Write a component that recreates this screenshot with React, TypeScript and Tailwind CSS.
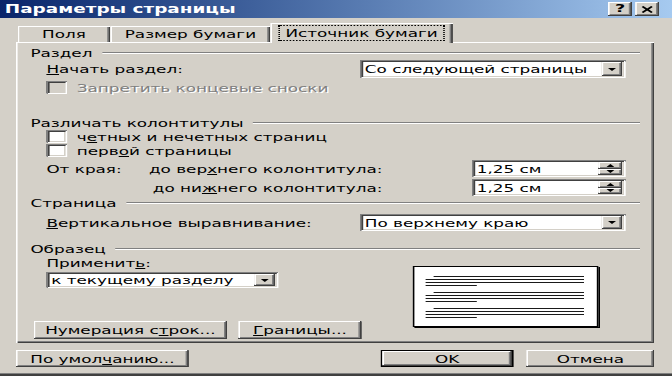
const raised =
  "bg-[#d4d0c8] shadow-[inset_-1px_-1px_0_#404040,inset_1px_1px_0_#ffffff,inset_-2px_-2px_0_#808080]";
const sunken =
  "shadow-[inset_1px_1px_0_#808080,inset_-1px_-1px_0_#ffffff,inset_2px_2px_0_#404040,inset_-2px_-2px_0_#d4d0c8]";

function Arrow() {
  return (
    <svg width="5" height="3" viewBox="0 0 5 3">
      <path d="M0 0h5L2.5 3z" fill="#000" />
    </svg>
  );
}

function Combo({ text, className }: { text: string; className: string }) {
  return (
    <div className={`flex items-center bg-white ${sunken} ${className}`}>
      <span className="flex-1 pl-[3px] whitespace-nowrap">{text}</span>
      <div className={`mr-[2px] flex h-[calc(100%-4px)] w-[13px] items-center justify-center ${raised}`}>
        <Arrow />
      </div>
    </div>
  );
}

function Spin({ text }: { text: string }) {
  return (
    <div className={`ml-auto flex h-[17px] w-[96px] items-center bg-white ${sunken}`}>
      <span className="flex-1 pl-[3px] whitespace-nowrap">{text}</span>
      <div className="mr-[2px] flex h-[13px] w-[15px] flex-col">
        <div className={`flex flex-1 items-center justify-center ${raised}`}>
          <svg width="5" height="3" viewBox="0 0 5 3">
            <path d="M2.5 0L5 3H0z" fill="#000" />
          </svg>
        </div>
        <div className={`flex flex-1 items-center justify-center ${raised}`}>
          <Arrow />
        </div>
      </div>
    </div>
  );
}

function Check({ disabled }: { disabled?: boolean }) {
  return (
    <div
      className={`h-[13px] w-[13px] shrink-0 ${disabled ? "bg-[#d4d0c8]" : "bg-white"} ${sunken}`}
    />
  );
}

function Group({ label }: { label: string }) {
  return (
    <div className="flex h-[12px] items-center pl-[9px] pr-[9px]">
      <span className="whitespace-nowrap">{label}</span>
      <div className="ml-[6px] h-0 flex-1 border-t border-b border-t-[#808080] border-b-white" />
    </div>
  );
}

function Btn({
  className,
  children,
}: {
  className: string;
  children: React.ReactNode;
}) {
  return (
    <div className={`flex items-center justify-center whitespace-nowrap ${raised} ${className}`}>
      {children}
    </div>
  );
}

function Para() {
  return (
    <div className="mb-[6px] flex flex-col gap-[2px]">
      <div className="ml-[5px] h-[1px] w-[94px] bg-[#1a1a1a]" />
      <div className="h-[1px] w-[99px] bg-[#1a1a1a]" />
      <div className="h-[1px] w-[99px] bg-[#1a1a1a]" />
      <div className="h-[1px] w-[32px] bg-[#1a1a1a]" />
    </div>
  );
}

export default function App() {
  return (
    <div className="h-[376px] w-[672px] overflow-hidden bg-[#d4d0c8]">
      <div className="flex h-[376px] w-[420px] origin-top-left scale-x-[1.6] flex-col bg-[#d4d0c8] font-['DejaVu_Sans',sans-serif] text-[10.5px] leading-[12px] text-black">
        {/* title bar */}
        <div className="flex h-[18px] shrink-0 items-center bg-linear-to-r from-[#0a246a] to-[#a6caf0] pl-[3px] pr-[8px]">
          <span className="text-[11.5px] font-bold text-white">Параметры страницы</span>
          <div className="ml-auto flex gap-[2px]">
            <div className={`flex h-[14px] w-[15px] items-center justify-center text-[11px] font-bold ${raised}`}>
              ?
            </div>
            <div className={`flex h-[14px] w-[15px] items-center justify-center ${raised}`}>
              <svg width="7" height="7" viewBox="0 0 7 7">
                <path d="M0.5 0.5L6.5 6.5M6.5 0.5L0.5 6.5" stroke="#000" strokeWidth="1.5" />
              </svg>
            </div>
          </div>
        </div>

        {/* tabs */}
        <div className="flex h-[24px] shrink-0 items-end pl-[11px]">
          <div className="flex h-[16px] w-[58px] items-center justify-center bg-[#d4d0c8] shadow-[inset_1px_1px_0_#ffffff,inset_-1px_0_0_#404040,inset_-2px_0_0_#808080]">
            Поля
          </div>
          <div className="flex h-[16px] w-[100px] items-center justify-center bg-[#d4d0c8] shadow-[inset_1px_1px_0_#ffffff,inset_-1px_0_0_#404040,inset_-2px_0_0_#808080]">
            Размер бумаги
          </div>
          <div className="relative z-10 -mb-[1px] flex h-[20px] w-[114px] items-center justify-center bg-[#d4d0c8] shadow-[inset_1px_1px_0_#ffffff,inset_-1px_0_0_#404040,inset_-2px_0_0_#808080]">
            <span className="border border-dotted border-black px-[3px] py-[1px] whitespace-nowrap">
              Источник бумаги
            </span>
          </div>
        </div>

        {/* panel */}
        <div className="ml-[10px] flex h-[301px] w-[399px] shrink-0 flex-col pt-[5px] shadow-[inset_1px_1px_0_#ffffff,inset_-1px_-1px_0_#404040,inset_-2px_-2px_0_#808080]">
          <Group label="Раздел" />
          <div className="mt-[1px] flex h-[18px] items-center pl-[19px] pr-[18px]">
            <span>
              <span className="underline">Н</span>ачать раздел:
            </span>
            <Combo text="Со следующей страницы" className="ml-auto h-[18px] w-[166px]" />
          </div>
          <div className="mt-[3px] flex h-[13px] items-center gap-[6px] pl-[19px]">
            <Check disabled />
            <span className="text-[#808080] [text-shadow:1px_1px_0_#ffffff]">
              Запретить концевые сноски
            </span>
          </div>

          <div className="mt-[23px]">
            <Group label="Различать колонтитулы" />
          </div>
          <div className="mt-[1px] flex h-[13px] items-center gap-[6px] pl-[19px]">
            <Check />
            <span>
              ч<span className="underline">е</span>тных и нечетных страниц
            </span>
          </div>
          <div className="mt-[1px] flex h-[13px] items-center gap-[6px] pl-[19px]">
            <Check />
            <span>
              перв<span className="underline">о</span>й страницы
            </span>
          </div>
          <div className="mt-[3px] flex h-[17px] items-center pl-[19px] pr-[18px]">
            <span className="w-[62px] shrink-0">От края:</span>
            <span className="w-[148px] shrink-0 text-right whitespace-nowrap">
              до вер<span className="underline">х</span>него колонтитула:
            </span>
            <Spin text="1,25 см" />
          </div>
          <div className="mt-[2px] flex h-[17px] items-center pl-[19px] pr-[18px]">
            <span className="w-[62px] shrink-0" />
            <span className="w-[148px] shrink-0 text-right whitespace-nowrap">
              до ни<span className="underline">ж</span>него колонтитула:
            </span>
            <Spin text="1,25 см" />
          </div>

          <div className="mt-[1px]">
            <Group label="Страница" />
          </div>
          <div className="mt-[5px] flex h-[17px] items-center pl-[19px] pr-[18px]">
            <span>
              <span className="underline">В</span>ертикальное выравнивание:
            </span>
            <Combo text="По верхнему краю" className="ml-auto h-[17px] w-[166px]" />
          </div>

          <div className="mt-[12px]">
            <Group label="Образец" />
          </div>
          <div className="mt-[2px] flex pl-[11px]">
            <div className="flex flex-col">
              <span className="ml-[8px] h-[12px]">
                Применит<span className="underline">ь</span>:
              </span>
              <Combo text="к текущему разделу" className="ml-[8px] mt-[3px] h-[16px] w-[145px]" />
              <div className="mt-[33px] flex gap-[7px]">
                <Btn className="h-[18px] w-[121px]">
                  <span>
                    Нумерация с<span className="underline">т</span>рок...
                  </span>
                </Btn>
                <Btn className="h-[18px] w-[77px]">
                  <span>
                    <span className="underline">Г</span>раницы...
                  </span>
                </Btn>
              </div>
            </div>
            <div className="ml-[32px] mt-[9px] h-[61px] w-[116px] border border-black bg-white pl-[7px] pt-[9px] shadow-[1px_1px_0_#000000]">
              <Para />
              <Para />
              <Para />
            </div>
          </div>
        </div>

        {/* bottom buttons */}
        <div className="mt-[7px] flex shrink-0 pl-[10px] pr-[11px]">
          <Btn className="h-[17px] w-[108px]">
            <span>
              По умол<span className="underline">ч</span>анию...
            </span>
          </Btn>
          <div className="ml-auto flex gap-[8px]">
            <div className="h-[17px] w-[83px] border border-black">
              <Btn className="h-full w-full">OK</Btn>
            </div>
            <Btn className="h-[17px] w-[80px]">Отмена</Btn>
          </div>
        </div>

        <div className="flex-1" />
        <div className="h-[1px] shrink-0 bg-[#808080]" />
        <div className="h-[2px] shrink-0 bg-[#404040]" />
      </div>
    </div>
  );
}
